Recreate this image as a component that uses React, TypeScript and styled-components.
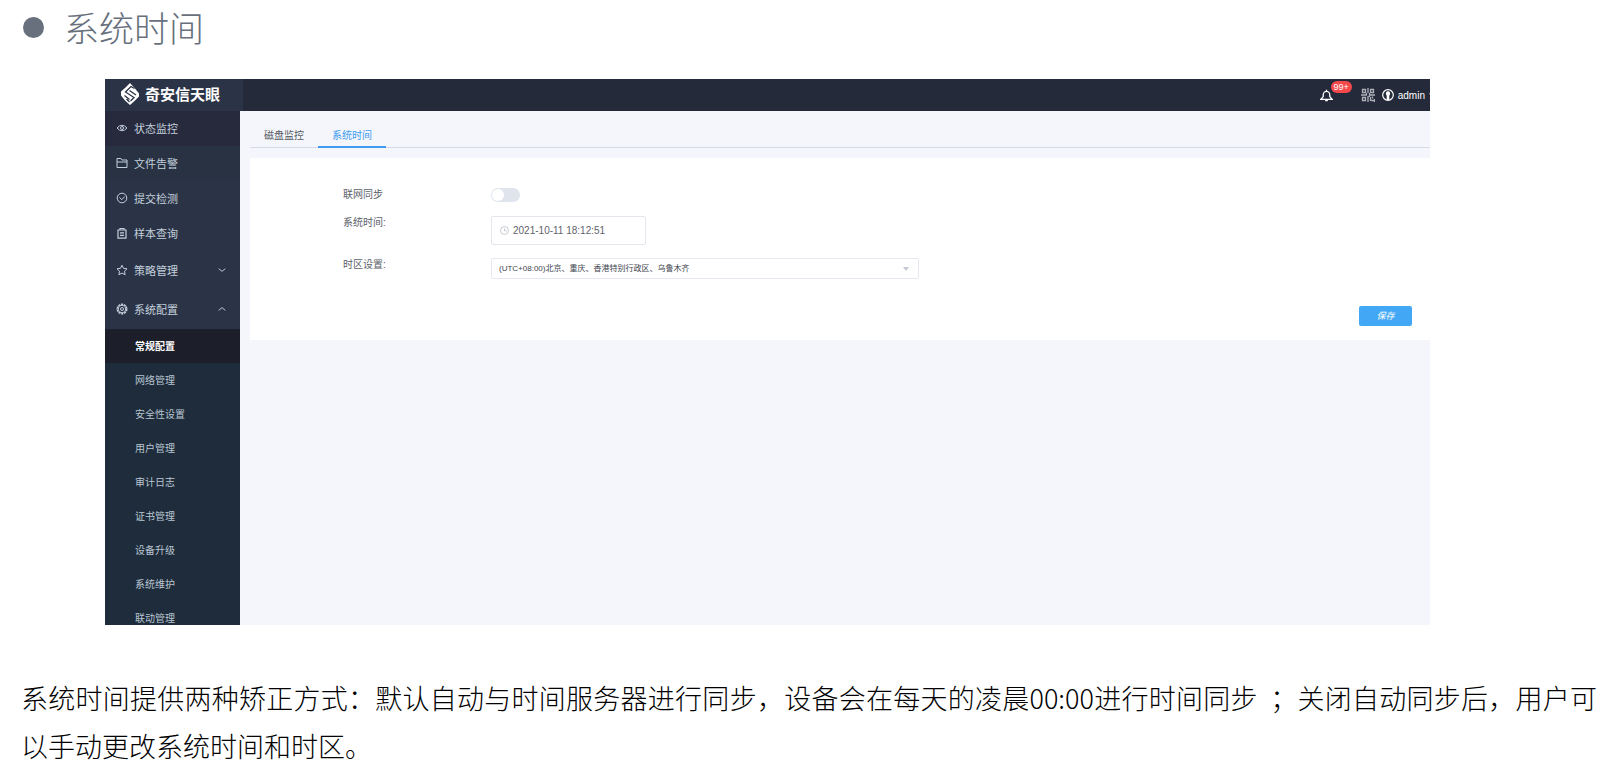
import React, { useState } from 'react';
import styled, { createGlobalStyle } from 'styled-components';

const GlobalStyle = createGlobalStyle`
  * { box-sizing: border-box; }
  body {
    margin: 0;
    background: #fff;
    font-family: 'Liberation Sans', 'Noto Sans CJK SC', sans-serif;
    font-size: 10px;
  }
  ul { list-style: none; margin: 0; padding: 0; }
  a { color: inherit; text-decoration: none; }
`;

const Heading = styled.h1`
  display: flex;
  align-items: center;
  gap: 20px;
  height: 54px;
  margin: 0 0 25px;
  padding-left: 23px;
  font-size: 35px;
  line-height: 48px;
  font-weight: 300;
  color: #68707d;
  &::before {
    content: '';
    width: 21px;
    height: 21px;
    border-radius: 50%;
    background: #68707d;
  }
`;

const HeadingText = styled.span`
  padding-top: 6px;
`;

const Frame = styled.section`
  margin: 0 179px 49px 105px;
  height: 546px;
  overflow: hidden;
  display: flex;
  flex-direction: column;
  background: #f4f6fb;
`;

const TopBar = styled.header`
  display: flex;
  justify-content: space-between;
  flex: 0 0 32px;
  background: #242a3a;
  color: #fff;
`;

const Brand = styled.a`
  display: flex;
  align-items: center;
  gap: 5px;
  width: 138px;
  padding: 0 0 3px 15px;
  background: #2b3446;
  font-size: 15px;
  font-weight: 700;
`;

const Tools = styled.div`
  display: flex;
  align-items: center;
  white-space: nowrap;
`;

const ToolButton = styled.button<{ $gap?: number }>`
  position: relative;
  display: flex;
  align-items: center;
  gap: 4px;
  margin: 0 0 0 ${(p) => p.$gap ?? 0}px;
  padding: 0;
  border: 0;
  background: none;
  color: #fff;
  font: inherit;
`;

const Badge = styled.span`
  position: absolute;
  left: 11px;
  top: -8px;
  width: 21px;
  height: 12px;
  border-radius: 6px;
  background: #f5484a;
  font-size: 9px;
  line-height: 12px;
  text-align: center;
`;

const Body = styled.div`
  display: flex;
  flex: 1;
  min-height: 0;
`;

const Sidebar = styled.nav`
  flex: 0 0 135px;
  background: #2b3446;
  color: #c3d0dc;
  overflow: hidden;
`;

const MenuLink = styled.a<{ $tall?: boolean; $shade?: string }>`
  display: flex;
  align-items: center;
  gap: 6px;
  height: ${(p) => (p.$tall ? 39 : 35)}px;
  padding: 0 14px 2px 11px;
  background: ${(p) => p.$shade ?? 'transparent'};
  font-size: 11px;
  svg:last-child:not(:first-child) { margin-left: auto; }
`;

const SubLink = styled.a<{ $active?: boolean }>`
  display: flex;
  align-items: center;
  height: 34px;
  padding: 0 0 2px 30px;
  background: ${(p) => (p.$active ? '#1c1e2a' : '#1f2c3b')};
  color: ${(p) => (p.$active ? '#fff' : '#b9c6d2')};
  font-weight: ${(p) => (p.$active ? 700 : 400)};
`;

const Main = styled.main`
  flex: 1;
  min-width: 0;
  padding: 12px 0 0 10px;
`;

const Tabs = styled.div`
  display: flex;
  height: 25px;
  margin-bottom: 10px;
  border-bottom: 1px solid #d5dce5;
`;

const Tab = styled.button<{ $active?: boolean }>`
  height: 25px;
  padding: 0 14px;
  border: 0;
  border-bottom: 2px solid ${(p) => (p.$active ? '#409bf0' : 'transparent')};
  background: none;
  color: ${(p) => (p.$active ? '#409bf0' : '#555b63')};
  font: inherit;
`;

const Card = styled.form`
  display: flex;
  flex-direction: column;
  height: 182px;
  padding: 30px 18px 14px 93px;
  background: #fff;
`;

const Field = styled.div<{ $gap: number }>`
  display: flex;
  align-items: flex-start;
  margin-bottom: ${(p) => p.$gap}px;
`;

const Label = styled.label`
  flex: 0 0 148px;
  line-height: 14px;
  color: #5c626b;
`;

const Switch = styled.input`
  appearance: none;
  width: 29px;
  height: 14px;
  margin: 0;
  padding: 1px;
  border-radius: 7px;
  background: #dfe4ed;
  &::before {
    content: '';
    display: block;
    width: 12px;
    height: 12px;
    border-radius: 50%;
    background: #fff;
  }
  &:checked { background: #409bf0; }
  &:checked::before { margin-left: 15px; }
`;

const TimeBox = styled.div`
  display: flex;
  align-items: center;
  gap: 4px;
  width: 155px;
  height: 29px;
  padding: 0 8px;
  border: 1px solid #e4e6ee;
  border-radius: 2px;
  color: #b4bac4;
  input {
    flex: 1;
    min-width: 0;
    padding: 0;
    border: 0;
    outline: 0;
    background: none;
    color: #5f646d;
    font: inherit;
  }
`;

const SelectBox = styled.div`
  display: flex;
  align-items: center;
  width: 428px;
  height: 21px;
  padding-right: 9px;
  border: 1px solid #e6e7f1;
  border-radius: 2px;
  select {
    appearance: none;
    flex: 1;
    height: 19px;
    padding: 0 0 0 7px;
    border: 0;
    outline: 0;
    background: none;
    color: #41464f;
    font: inherit;
    font-size: 8px;
  }
`;

const Save = styled.button`
  align-self: flex-end;
  width: 53px;
  height: 20px;
  margin-top: auto;
  padding: 0 0 2px;
  border: 0;
  border-radius: 2px;
  background: #42a8f5;
  color: #fff;
  font: inherit;
  font-size: 9px;
  font-style: italic;
`;

const Note = styled.p`
  margin: 0;
  padding: 0 12px 0 21px;
  font-family: 'Noto Sans CJK SC', sans-serif;
  font-size: 27px;
  font-weight: 300;
  line-height: 48px;
  color: #000;
`;

const NoteLine = styled.span<{ $full?: boolean }>`
  display: block;
  text-align: ${(p) => (p.$full ? 'justify' : 'left')};
  text-align-last: ${(p) => (p.$full ? 'justify' : 'left')};
`;

type IconProps = { size?: number; children: React.ReactNode };
const Icon = ({ size = 12, children }: IconProps) => (
  <svg width={size} height={size} viewBox="0 0 12 12" fill="none" stroke="currentColor" strokeWidth="1" aria-hidden="true">
    {children}
  </svg>
);

const Logo = () => (
  <svg width="20" height="24" viewBox="0 0 20 24" aria-hidden="true">
    <path d="M10 1 15 6.500 19 11.500v3L15 18.500 10 23 5 18.500 1 13.500v-4L5 6Z" fill="#fff" />
    <path d="M14.500 6.500 11 4.500 5.500 10 14 15.500 10.500 19M6.500 17 9.500 20M4.500 13.500 9.500 17.500M9.500 8.500 16 13" fill="none" stroke="#2b3446" strokeWidth="1.300" />
  </svg>
);

const EyeIcon = () => (
  <Icon>
    <path d="M1 6q5-5.5 10 0q-5 5.5-10 0Z" />
    <circle cx="6" cy="6" r="1.5" />
  </Icon>
);
const FolderIcon = () => (
  <Icon>
    <path d="M1 10.500V1.500h4l1 1.500h5v7.500ZM1 5h10" />
  </Icon>
);
const CheckIcon = () => (
  <Icon>
    <circle cx="6" cy="6" r="4.8" />
    <path d="m3.5 5.5 2.3 2.2 3-3.2" />
  </Icon>
);
const ClipIcon = () => (
  <Icon>
    <path d="M2 3h8v8.200H2ZM4 3V1.500h4V3M4 5.800h4M4 8.300h4" strokeWidth="1.200" />
  </Icon>
);
const StarIcon = () => (
  <Icon>
    <path d="m6 1.2 1.5 3.1 3.5.5-2.5 2.4.6 3.5L6 9.1l-3.1 1.6.6-3.5L1 4.8l3.5-.5Z" />
  </Icon>
);
const GearIcon = () => (
  <Icon>
    <circle cx="6" cy="6" r="4.8" strokeDasharray="2.2 .8" strokeWidth="1.4" />
    <circle cx="6" cy="6" r="3.8" />
    <circle cx="6" cy="6" r="1.5" />
  </Icon>
);
const Chevron = ({ up }: { up?: boolean }) => (
  <Icon size={8}>
    <path d={up ? 'm1 8 5-4 5 4' : 'm1 4 5 4 5-4'} strokeWidth="1.4" />
  </Icon>
);
const BellIcon = () => (
  <Icon size={13}>
    <path d="M.8 9.500h10.400L9 7V5.200a3 3 0 0 0-6 0V7ZM4.800 10.800h2.400M6 .8v1.400" strokeWidth="1.2" />
  </Icon>
);
const QrIcon = () => (
  <svg width="14" height="14" viewBox="0 0 14 14" fill="none" stroke="#aeb1b8" strokeWidth="1.300" aria-hidden="true">
    <path d="M1.500 1.500h3v3h-3zM9.500 1.500h3v3h-3zM1.500 9.500h3v3h-3zM7 0v5M0 7h6M8 7h6M7 8v6M9.500 9v4M11.500 8.500v2M13.500 11v3M10 12.500h3M5.500 5v2M8.500 5v4" />
  </svg>
);
const UserIcon = () => (
  <svg width="12" height="12" viewBox="0 0 12 12" aria-hidden="true">
    <circle cx="6" cy="6" r="5.3" fill="none" stroke="#fff" strokeWidth="1.2" />
    <path d="M6 2.300a2.200 2.200 0 0 1 1.600 3.700L7.300 7v4H4.700V7l-.3-1A2.200 2.200 0 0 1 6 2.300Z" fill="#fff" />
  </svg>
);
const ClockIcon = () => (
  <Icon size={9}>
    <circle cx="6" cy="6" r="5.3" />
    <path d="M6 3v3.5h3" />
  </Icon>
);
const Caret = () => (
  <svg width="1" height="4" viewBox="0 0 1 4" aria-hidden="true">
    <path d="M0 0h1v2Z" fill="#aeb1b8" />
  </svg>
);

const submenu = ['常规配置', '网络管理', '安全性设置', '用户管理', '审计日志', '证书管理', '设备升级', '系统维护', '联动管理'];

export default function App() {
  const [synced, setSynced] = useState(false);
  const [time, setTime] = useState('2021-10-11 18:12:51');
  return (
    <>
      <GlobalStyle />
      <Heading><HeadingText>系统时间</HeadingText></Heading>
      <Frame>
        <TopBar>
          <Brand href="#"><Logo />奇安信天眼</Brand>
          <Tools>
            <ToolButton aria-label="通知"><BellIcon /><Badge>99+</Badge></ToolButton>
            <ToolButton $gap={28} aria-label="二维码"><QrIcon /></ToolButton>
            <ToolButton $gap={7}><UserIcon />admin<Caret /></ToolButton>
          </Tools>
        </TopBar>
        <Body>
          <Sidebar>
            <ul>
              <li><MenuLink href="#" $shade="#262a3c"><EyeIcon />状态监控</MenuLink></li>
              <li><MenuLink href="#" $shade="#283243"><FolderIcon />文件告警</MenuLink></li>
              <li><MenuLink href="#"><CheckIcon />提交检测</MenuLink></li>
              <li><MenuLink href="#"><ClipIcon />样本查询</MenuLink></li>
              <li><MenuLink href="#" $tall><StarIcon />策略管理<Chevron /></MenuLink></li>
              <li>
                <MenuLink href="#" $tall><GearIcon />系统配置<Chevron up /></MenuLink>
                <ul>
                  {submenu.map((name, i) => (
                    <li key={name}><SubLink href="#" $active={i === 0}>{name}</SubLink></li>
                  ))}
                </ul>
              </li>
            </ul>
          </Sidebar>
          <Main>
            <Tabs role="tablist">
              <Tab role="tab" aria-selected={false}>磁盘监控</Tab>
              <Tab role="tab" aria-selected $active>系统时间</Tab>
            </Tabs>
            <Card onSubmit={(e) => e.preventDefault()}>
              <Field $gap={14}>
                <Label htmlFor="sync">联网同步</Label>
                <Switch id="sync" type="checkbox" role="switch" checked={synced} onChange={() => setSynced(!synced)} />
              </Field>
              <Field $gap={13}>
                <Label htmlFor="time">系统时间:</Label>
                <TimeBox>
                  <ClockIcon />
                  <input id="time" value={time} onChange={(e) => setTime(e.target.value)} />
                </TimeBox>
              </Field>
              <Field $gap={0}>
                <Label htmlFor="zone">时区设置:</Label>
                <SelectBox>
                  <select id="zone">
                    <option>(UTC+08:00)北京、重庆、香港特别行政区、乌鲁木齐</option>
                  </select>
                  <svg width="6" height="4" viewBox="0 0 6 4" aria-hidden="true"><path d="M0 0h6L3 4Z" fill="#c3c8d1" /></svg>
                </SelectBox>
              </Field>
              <Save type="submit">保存</Save>
            </Card>
          </Main>
        </Body>
      </Frame>
      <Note>
        <NoteLine $full>系统时间提供两种矫正方式：默认自动与时间服务器进行同步，设备会在每天的凌晨00:00进行时间同步&nbsp;&nbsp;；关闭自动同步后，用户可</NoteLine>
        <NoteLine>以手动更改系统时间和时区。</NoteLine>
      </Note>
    </>
  );
}
